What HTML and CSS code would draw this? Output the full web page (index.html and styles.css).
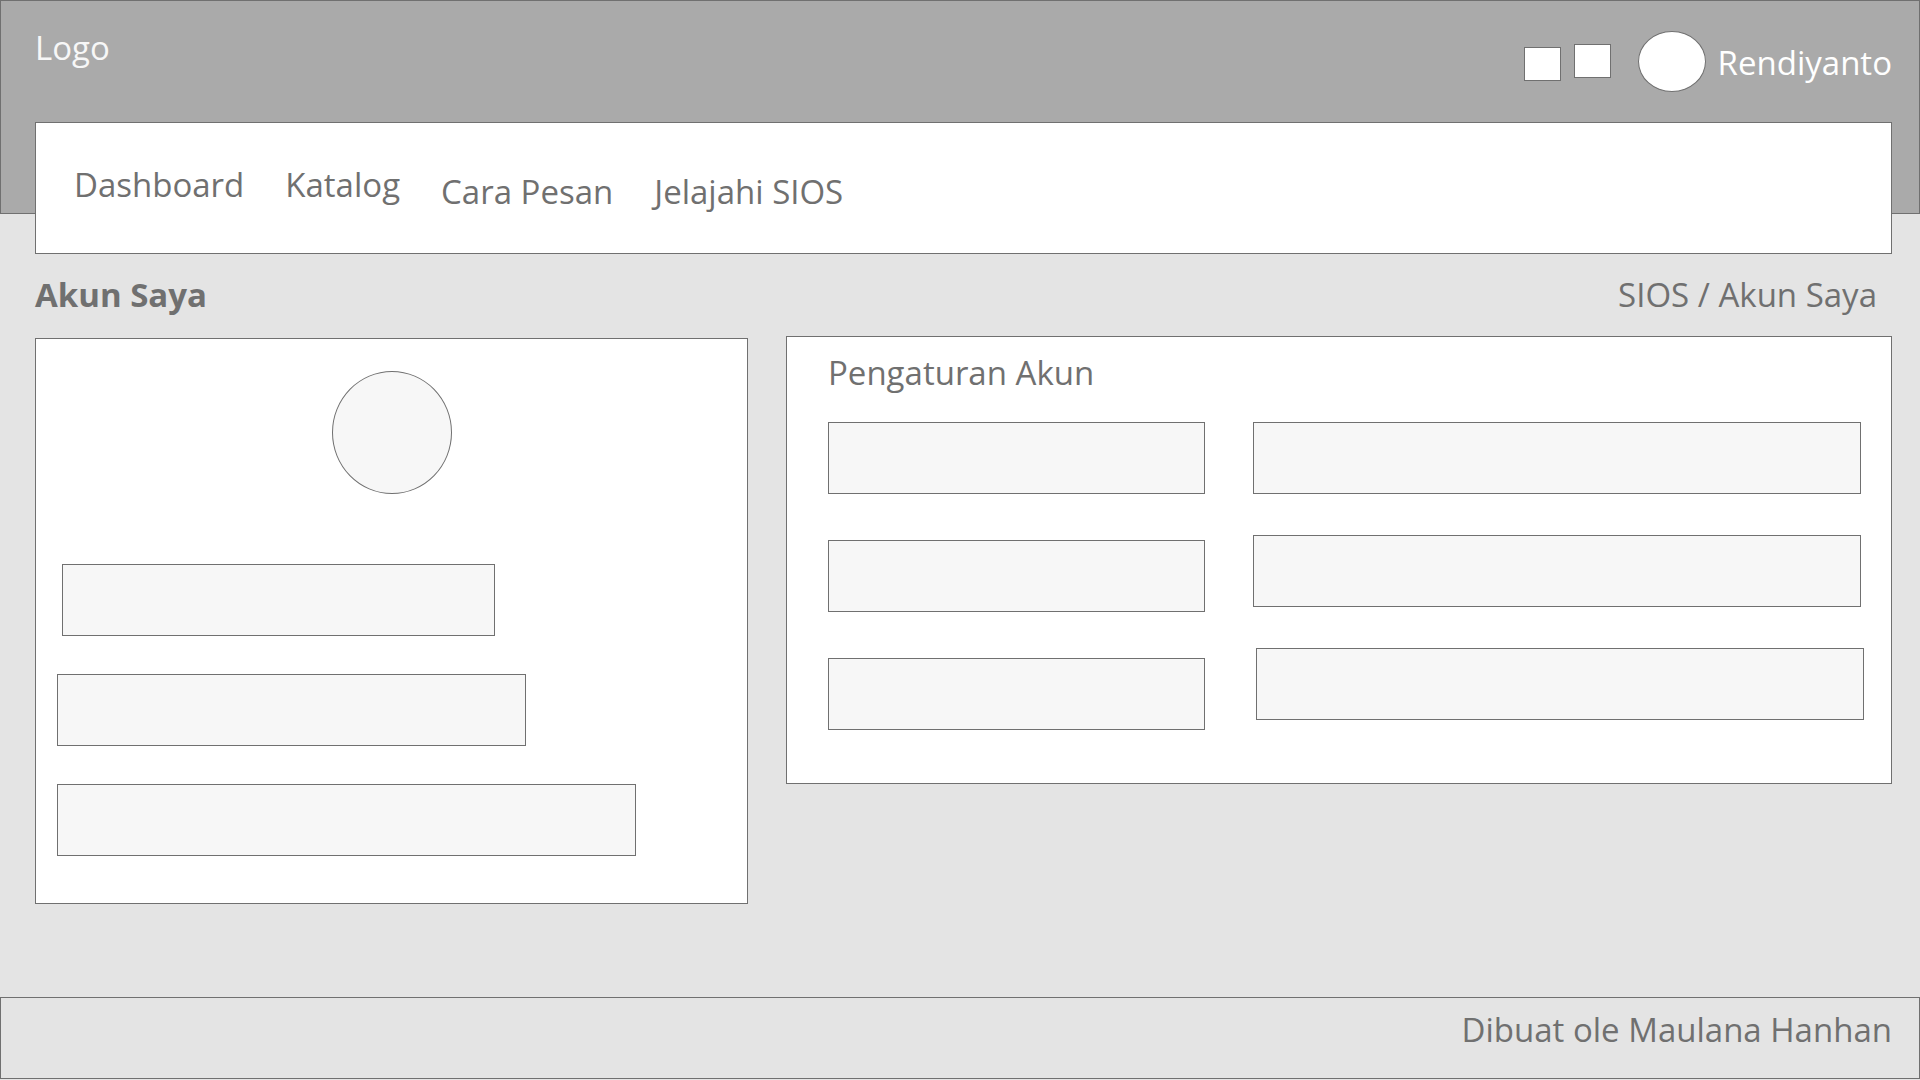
FILE: index.html
```html
<!DOCTYPE html>
<html lang="id">
<head>
<meta charset="utf-8">
<meta name="viewport" content="width=device-width, initial-scale=1">
<title>Akun Saya</title>
<link rel="stylesheet" href="styles.css">
</head>
<body>
<header class="header">
  <a class="logo" href="#">Logo</a>
  <div class="user">
    <button class="icon-button" type="button" aria-label="Notifikasi"></button>
    <button class="icon-button icon-button-raised" type="button" aria-label="Pesan"></button>
    <span class="avatar"></span>
    <span class="user-name">Rendiyanto</span>
  </div>
</header>
<nav class="nav">
  <a href="#">Dashboard</a>
  <a href="#">Katalog</a>
  <a class="nav-low" href="#">Cara Pesan</a>
  <a class="nav-low" href="#">Jelajahi SIOS</a>
</nav>
<main class="main">
  <div class="title-row">
    <h1 class="title">Akun Saya</h1>
    <p class="breadcrumb">SIOS / Akun Saya</p>
  </div>
  <div class="cards">
    <section class="card profile">
      <div class="photo"></div>
      <div class="box box-short"></div>
      <div class="box box-medium"></div>
      <div class="box box-long"></div>
    </section>
    <section class="card settings">
      <h2 class="settings-title">Pengaturan Akun</h2>
      <form class="form">
        <div class="names">
          <div class="box"></div>
          <div class="box"></div>
          <div class="box"></div>
        </div>
        <div class="values">
          <input class="box" type="text" aria-label="Isian 1">
          <input class="box" type="text" aria-label="Isian 2">
          <input class="box box-shifted" type="text" aria-label="Isian 3">
        </div>
      </form>
    </section>
  </div>
</main>
<footer class="footer">Dibuat ole Maulana Hanhan</footer>
</body>
</html>
```
FILE: styles.css
```css
* {
  box-sizing: border-box;
}

body {
  margin: 0;
  min-height: 100vh;
  display: flex;
  flex-direction: column;
  background: #e4e4e4;
  color: #707070;
  font-family: "Segoe UI", "Open Sans", "Noto Sans", sans-serif;
  font-size: 33px;
  line-height: 48px;
}

a {
  color: inherit;
  text-decoration: none;
}

h1,
h2,
p {
  margin: 0;
  font-size: inherit;
}

.header {
  display: flex;
  justify-content: space-between;
  align-items: flex-start;
  height: 214px;
  padding: 23px 27px 0 34px;
  border: 1px solid #707070;
  background: #aaa;
}

.logo {
  color: #f7f7f7;
}

.user {
  display: flex;
  align-items: flex-start;
  padding-top: 7px;
  color: #fff;
}

.icon-button {
  width: 37px;
  height: 34px;
  margin: 16px 13px 0 0;
  padding: 0;
  border: 1px solid #707070;
  background: #fff;
}

.icon-button-raised {
  margin: 13px 27px 0 0;
}

.avatar {
  width: 68px;
  height: 61px;
  margin-right: 12px;
  border: 1px solid #707070;
  border-radius: 50%;
  background: #fff;
}

.user-name {
  padding-top: 8px;
}

/* The menu bar hangs over the lower edge of the header. */
.nav {
  display: flex;
  align-items: flex-start;
  gap: 41px;
  height: 132px;
  margin: -92px 28px 0 35px;
  padding: 38px;
  border: 1px solid #707070;
  background: #fff;
}

.nav-low {
  margin-top: 7px;
}

.main {
  flex: 1;
  padding: 17px 28px 93px 35px;
}

.title-row {
  display: flex;
  justify-content: space-between;
  padding-right: 15px;
}

.title {
  font-weight: 700;
}

.cards {
  display: grid;
  grid-template-columns: 713fr 1106fr;
  gap: 38px;
  align-items: start;
  padding-top: 17px;
}

.card {
  border: 1px solid #707070;
  background: #fff;
}

.profile {
  display: flex;
  flex-direction: column;
  gap: 38px;
  margin-top: 2px;
  padding: 32px 21px 47px;
}

.photo {
  width: 120px;
  height: 123px;
  margin: 0 auto 32px;
  border: 1px solid #707070;
  border-radius: 50%;
  background: #f7f7f7;
}

.box {
  display: block;
  width: 100%;
  max-width: 100%;
  height: 72px;
  padding: 0 16px;
  border: 1px solid #707070;
  border-radius: 0;
  background: #f7f7f7;
  color: inherit;
  font: inherit;
}

.box-short {
  width: 433px;
  margin-left: 5px;
}

.box-medium {
  width: 469px;
}

.box-long {
  width: 579px;
}

.settings {
  padding: 12px 30px 53px 41px;
}

.settings-title {
  font-weight: 400;
}

.form {
  display: grid;
  grid-template-columns: 377fr 608fr;
  gap: 48px;
  padding-top: 25px;
}

.names,
.values {
  display: flex;
  flex-direction: column;
  gap: 46px;
}

.values {
  gap: 41px;
}

.box-shifted {
  margin-left: 3px;
}

.footer {
  height: 82px;
  margin-bottom: 1px;
  padding: 8px 27px 0;
  border: 1px solid #707070;
  text-align: right;
}
```
